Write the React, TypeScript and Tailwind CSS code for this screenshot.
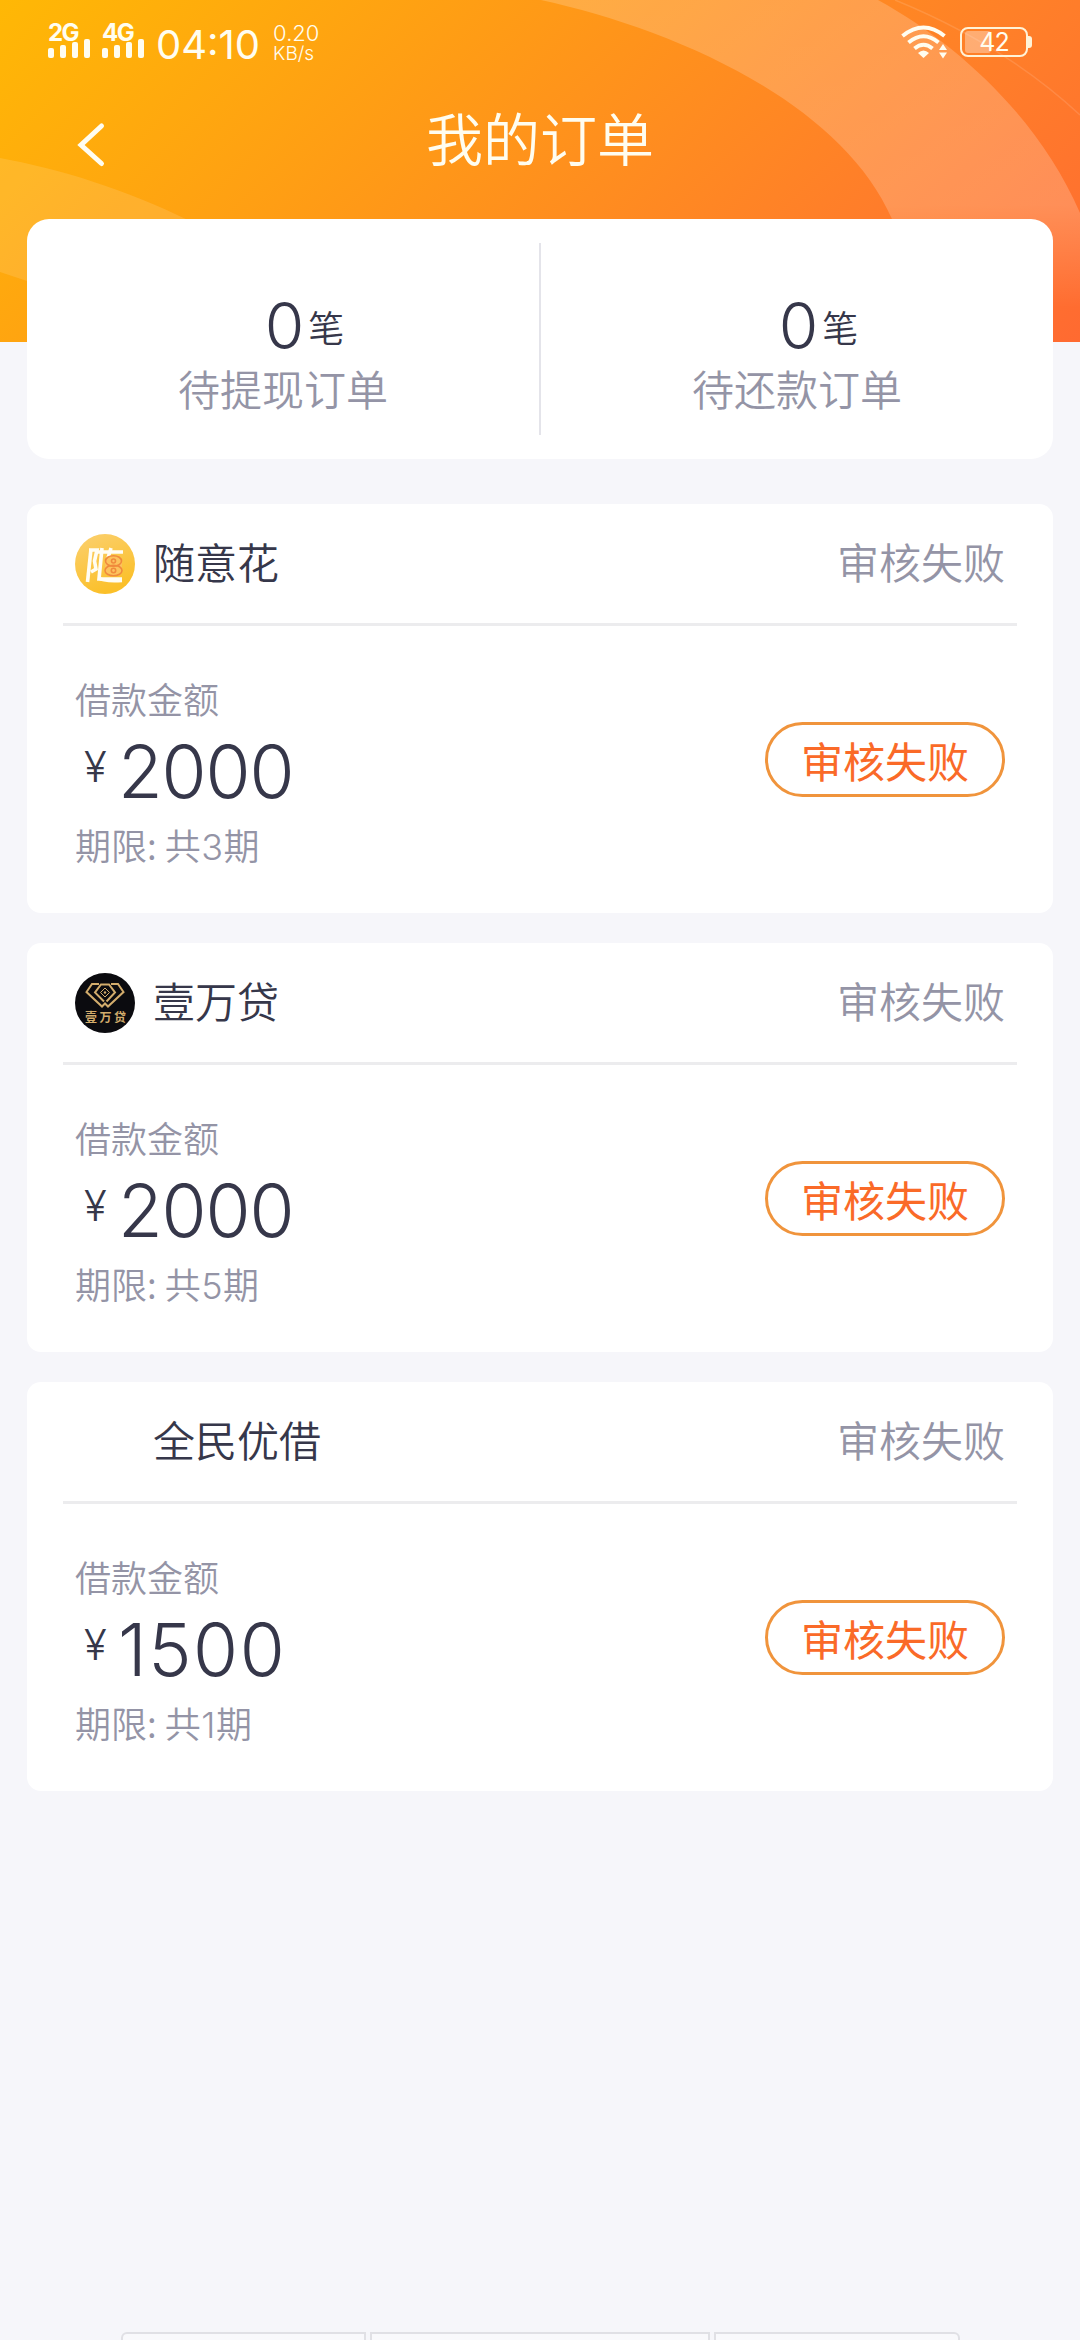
import clsx from 'clsx';

type Order = {
  name: string;
  amount: string;
  periods: number;
  logo: React.ReactNode;
};

function SuiyihuaLogo() {
  return (
    <svg viewBox="0 0 60 60" className="h-15 w-15">
      <defs>
        <linearGradient id="gold" x1="0" y1="0" x2="0.4" y2="1">
          <stop offset="0" stopColor="#fbd070" />
          <stop offset="1" stopColor="#fbc02a" />
        </linearGradient>
      </defs>
      <circle cx="30" cy="30" r="30" fill="url(#gold)" />
      <g fill="none" stroke="#fffdf4" strokeWidth="3.6">
        <path d="M16 15 L12.500 48" />
        <path d="M14 16 H22 L19.500 27 L21 35 L16 38" />
        <path d="M27 14 L24 45 H47" />
        <path d="M23 18 H48 M36 14 L33 24" />
        <path d="M24 44 Q28 47.500 47 46.500" />
      </g>
      <rect x="30" y="22" width="17" height="20" rx="6" fill="#fcc25c" />
      <g fill="none" stroke="#f08a3c" strokeWidth="1.600">
        <ellipse cx="38.500" cy="27" rx="8" ry="5.300" />
        <ellipse cx="38.500" cy="36.500" rx="8.500" ry="5.300" />
        <circle cx="38.500" cy="27" r="2" />
        <circle cx="38.500" cy="36.500" r="2.200" />
      </g>
    </svg>
  );
}

function YiwandaiLogo() {
  return (
    <div className="relative h-15 w-15 rounded-full bg-[#0b0b0f]">
      <svg viewBox="0 0 60 60" className="h-15 w-15" fill="none" stroke="#d2ac6c" strokeWidth="2">
        <path d="M24 11 H17 L11.500 19 L27 33.500 L30 30.500 L33 33.500 L48.500 19 L43 11 H36" />
        <path d="M29 28.500 L20 19.500 L26 11.500 H34 L40 19.500 L31.500 28.500" />
        <path d="M30 15 L34.500 19.500 L30 24 L25.500 19.500 Z" strokeWidth="1" />
        <circle cx="30" cy="19.500" r="1.200" fill="#d2ac6c" stroke="none" />
      </svg>
      <span className="absolute top-[38px] left-[10px] text-[12px] leading-[12px] font-bold tracking-[2.500px] whitespace-nowrap text-[#d2ac6c]">
        壹万贷
      </span>
    </div>
  );
}

const orders: Order[] = [
  { name: '随意花', amount: '2000', periods: 3, logo: <SuiyihuaLogo /> },
  { name: '壹万贷', amount: '2000', periods: 5, logo: <YiwandaiLogo /> },
  { name: '全民优借', amount: '1500', periods: 1, logo: null },
];

function Signal({ label }: { label: string }) {
  return (
    <div className="w-[42px]">
      <div className="font-[Inter] text-[24px] leading-[19px] font-bold tracking-[-1.500px]">{label}</div>
      <div className="-mt-[3px] flex h-[19px] items-end gap-[6px]">
        <div className="h-[10px] w-[6px] rounded-[2px] bg-[#fffdf0]" />
        <div className="h-[13px] w-[6px] rounded-[2px] bg-[#fffdf0]" />
        <div className="h-[16px] w-[6px] rounded-[2px] bg-[#fffdf0]" />
        <div className="h-[19px] w-[6px] rounded-[2px] bg-[#fffdf0]" />
      </div>
    </div>
  );
}

function StatusBar() {
  return (
    <div className="flex h-[84px] items-start pr-[48px] pl-[48px] text-[#fffdf0]">
      <div className="flex gap-[12px] pt-[23px]">
        <Signal label="2G" />
        <Signal label="4G" />
      </div>
      <div className="ml-[12px] pt-[25px] font-[Inter] text-[40px] leading-[40px]">04:10</div>
      <div className="ml-[13px] pt-[23px] font-[Inter] font-[350]">
        <div className="text-[22px] leading-[20px]">0.20</div>
        <div className="text-[19px] leading-[21px]">KB/s</div>
      </div>
      <div className="ml-auto flex pt-[25px]">
        <svg viewBox="0 0 46 34" className="h-[34px] w-[46px]" fill="none" stroke="#fffdf0" strokeWidth="4">
          <path d="M1.500 11 Q22.500 -6 43.500 11" />
          <path d="M7.500 17.500 Q22.500 5 37.500 17.500" />
          <path d="M13.500 23.500 Q22.500 16 31.500 23.500" />
          <path d="M17 28 Q22.500 23 28 28 L22.500 33 Z" fill="#fffdf0" stroke="none" />
          <path d="M38 25 L42 19 L46 25 Z M38 27.500 H46 L42 33.500 Z" fill="#fffdf0" stroke="none" />
        </svg>
        <div className="relative mt-[2px] ml-[13px] flex h-[30px] w-[68px] items-center justify-center rounded-[8px] border-2 border-[#fff3d8]">
          <div className="absolute top-[2px] left-[3px] h-[22px] w-[26px] rounded-[3px] bg-white/35" />
          <span className="relative font-[Inter] text-[25px] leading-[26px] tracking-[-1px]">42</span>
        </div>
        <div className="mt-[11px] h-[12px] w-[4px] rounded-r-[3px] bg-[#fff3d8]" />
      </div>
    </div>
  );
}

function HeaderArt() {
  return (
    <svg viewBox="0 0 1080 342" className="absolute inset-0 h-[342px] w-[1080px]">
      <defs>
        <linearGradient id="ring" x1="0" y1="0" x2="0" y2="1">
          <stop offset="0" stopColor="#fff" stopOpacity="0.19" />
          <stop offset="0.600" stopColor="#fff" stopOpacity="0.2" />
          <stop offset="0.900" stopColor="#fff" stopOpacity="0" />
        </linearGradient>
      </defs>
      <path
        d="M541 0 C670 28 840 100 892 219 L892 342 H1080 V213 C1040 120 960 45 878 0 Z"
        fill="url(#ring)"
      />
      <path d="M0 158 C60 169 125 189 190 221 L190 342 L27 281 L0 272 Z" fill="#fff" fillOpacity="0.120" />
      <path d="M895 0 Q1005 45 1080 115" fill="none" stroke="#fff" strokeOpacity="0.120" strokeWidth="1.500" />
    </svg>
  );
}

function Stat({ label }: { label: string }) {
  return (
    <div className="flex flex-1 flex-col items-center pt-[74px]">
      <div className="flex items-center pl-[43px] text-[#36374a]">
        <span className="font-[Inter] text-[64px] leading-[66px] font-[350]">0</span>
        <span className="ml-[4px] text-[36px] leading-[64px] font-[350]">笔</span>
      </div>
      <div className="mt-[8px] text-[42px] leading-[42px] font-[350] text-[#9494a6]">{label}</div>
    </div>
  );
}

function OrderCard({ order }: { order: Order }) {
  return (
    <div className="h-[409px] rounded-[14px] bg-white px-[36px]">
      <div className="flex h-[122px] items-center border-b-3 border-[#ececee] px-[12px]">
        <div className="h-15 w-15">{order.logo}</div>
        <div className="-mt-[5px] ml-[18px] text-[42px] leading-[42px] font-[350] text-[#36374a]">{order.name}</div>
        <div className="-mt-[5px] ml-auto text-[42px] leading-[42px] font-[350] text-[#9494a6]">审核失败</div>
      </div>
      <div className="flex justify-between px-[12px]">
        <div className="pt-[54px] text-[#9494a6]">
          <div className="text-[36px] leading-[36px] font-[350]">借款金额</div>
          <div className="mt-[20px] flex h-[70px] items-start text-[#36374a]">
            <span className="ml-[9px] w-[34px] pt-[7px] font-[Inter] text-[42px] leading-[48px] font-light">¥</span>
            <span
              className={clsx(
                'font-[Inter] text-[73px] leading-[72px] font-[350]',
                order.amount.startsWith('1') ? 'tracking-[1.500px]' : 'tracking-[-1.200px]',
              )}
            >
              {order.amount}
            </span>
          </div>
          <div className="mt-[20px] text-[36px] leading-[36px] font-[350]">
            期限: 共<span className="mx-[0.500px] font-[Inter] font-light">{order.periods}</span>期
          </div>
        </div>
        <button className="mt-[96px] h-[75px] w-[240px] rounded-full border-3 border-[#f0943c] text-[42px] leading-[68px] text-[#fa6a28]">
          审核失败
        </button>
      </div>
    </div>
  );
}

function App() {
  return (
    <div className="relative flex h-[2340px] w-[1080px] flex-col overflow-hidden bg-[#f6f6fa] font-['Noto_Sans_CJK_SC',sans-serif]">
      <div className="relative h-[342px] shrink-0 bg-linear-[135deg,#ffb805_0%,#ff9c15_36%,#ff7d2a_76%,#ff6a31_100%]">
        <HeaderArt />
        <div className="relative">
          <StatusBar />
          <div className="relative flex h-[110px] items-center justify-center">
            <svg viewBox="0 0 30 46" className="absolute top-[38px] left-[76px] h-[46px] w-[30px]">
              <path d="M25.500 4 L5 23 L25.500 41.500" fill="none" stroke="#fffdf0" strokeWidth="5" strokeLinecap="round" />
            </svg>
            <h1 className="-mt-[6px] text-[57px] leading-[56px] font-[350] text-[#fffdf0]">我的订单</h1>
          </div>
        </div>
      </div>

      <div className="relative mx-[27px] -mt-[123px] flex h-[240px] shrink-0 rounded-[22px] bg-white">
        <Stat label="待提现订单" />
        <div className="mt-[24px] h-[192px] w-[2px] bg-[#e4e4ea]" />
        <Stat label="待还款订单" />
      </div>

      <div className="mx-[27px] mt-[45px] flex flex-col gap-[30px]">
        {orders.map((order) => (
          <OrderCard key={order.name} order={order} />
        ))}
      </div>

      <div className="mt-auto flex h-[8px] shrink-0 gap-[4px] overflow-hidden pl-[121px]">
        <div className="h-[20px] w-[245px] rounded-tl-[6px] border-2 border-[#e0e0e5] bg-[#f9f9fc]" />
        <div className="h-[20px] w-[340px] border-2 border-[#e0e0e5] bg-[#f9f9fc]" />
        <div className="h-[20px] w-[246px] rounded-tr-[6px] border-2 border-[#e0e0e5] bg-[#f9f9fc]" />
      </div>
    </div>
  );
}

export default App;
